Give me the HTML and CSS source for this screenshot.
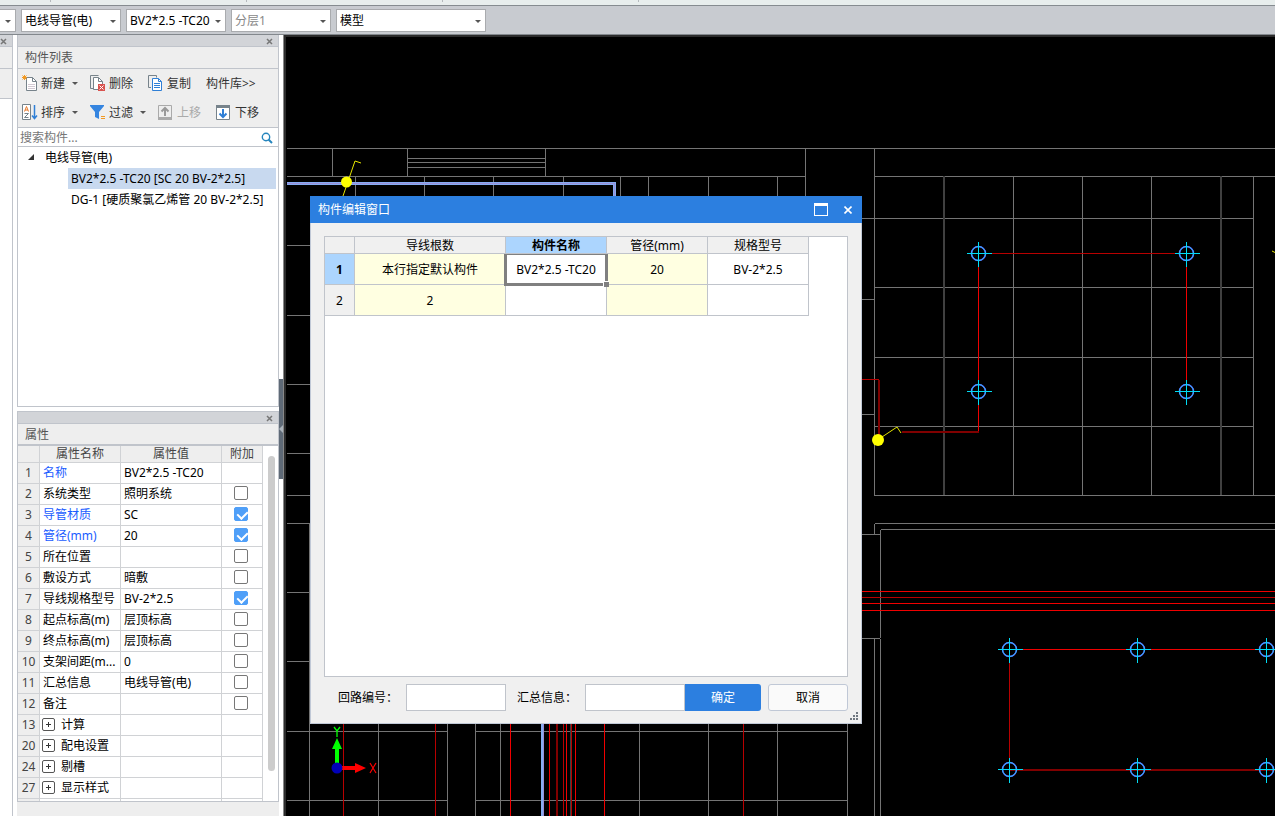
FILE: index.html
```html
<!DOCTYPE html>
<html lang="zh-CN">
<head>
  <meta charset="UTF-8" />
  <meta name="viewport" content="width=device-width, initial-scale=1.0" />
  <title>构件编辑窗口</title>
  <link rel="stylesheet" href="styles.css">
</head>
<body>
  <div class="ribbon-edge"><i></i><i></i><i></i><i></i></div>

  <header class="toolbar">
    <div class="combo combo-cut"><select aria-label="楼层"><option></option></select></div>
    <div class="combo"><select aria-label="构件类型"><option>电线导管(电)</option></select></div>
    <div class="combo"><select aria-label="构件"><option>BV2*2.5 -TC20</option></select></div>
    <div class="combo muted"><select aria-label="分层"><option>分层1</option></select></div>
    <div class="combo combo-wide"><select aria-label="显示"><option>模型</option></select></div>
  </header>

  <main class="workspace">
    <aside class="sliver">
      <div class="dock-strip"><button class="dock-close" aria-label="关闭"><svg width="7" height="7"><path d="M1 1l5 5M6 1l-5 5"/></svg></button></div>
      <div class="sliver-head"></div>
      <div class="sliver-tools"></div>
    </aside>

    <div class="docks">
      <section class="panel list-panel">
        <div class="dock-strip"><button class="dock-close" aria-label="关闭"><svg width="7" height="7"><path d="M1 1l5 5M6 1l-5 5"/></svg></button></div>
        <h2>构件列表</h2>
        <div class="tools">
          <div class="tool-row">
            <button class="tool new">
              <svg width="16" height="17" fill="none"><path d="M4.500 2.500h6l4 4v9h-10z" fill="#fff" stroke="#77838b"/><path d="M10.500 2.500v4h4" stroke="#77838b"/><path d="M6 9.500h7M6 11.500h7M6 13.500h7" stroke="#d3c9d3"/><path d="M2.500 0v5M0 2.500h5M.5.500l4 4M4.500.500l-4 4" stroke="#f29a23"/></svg>
              新建<i class="caret"></i></button>
            <button class="tool del">
              <svg width="16" height="17" fill="none"><path d="M3 13.500H.5v-13h8" stroke="#77838b"/><path d="M3.500 2.500h5l4 4v8h-9z" fill="#fff" stroke="#77838b"/><path d="M8.500 2.500v4h4" stroke="#77838b"/><path d="M8 9h7v7H8z" fill="#d9534f"/><path d="M9.500 10.500l4 4M13.500 10.500l-4 4" stroke="#fff"/></svg>
              删除</button>
            <button class="tool copy">
              <svg width="16" height="17" fill="none"><path d="M3 12.500H.5v-12h8v2" stroke="#77838b"/><path d="M4.500 3.500h6l3 3v9h-9z" fill="#fff" stroke="#2f7fd6"/><path d="M10.500 3.500v3h3M6 8.500h6M6 10.500h6M6 12.500h6" stroke="#2f7fd6"/></svg>
              复制</button>
            <button class="tool">构件库&gt;&gt;</button>
          </div>
          <div class="tool-row">
            <button class="tool new">
              <svg width="16" height="17" fill="none"><path d="M.5.500h8v15h-8z" fill="#fff" stroke="#77838b"/><path d="M2.500 7.500l2-5 2 5M3 6h3" stroke="#e8792b"/><path d="M2.500 9.500h4l-4 4h4" stroke="#77838b"/><path d="M12.500 1v13M10 11.500l2.500 3 2.500-3" stroke="#2f7fd6" stroke-width="1.500"/></svg>
              排序<i class="caret"></i></button>
            <button class="tool filter">
              <svg width="16" height="17"><path d="M0 1h14v1L9 8v7l-4-2V8L0 2z" fill="#3585e0"/><path d="M11 12h4v1h-4zM11 14h4v1h-4z" fill="#f29a23"/></svg>
              过滤<i class="caret"></i></button>
            <button class="tool up" disabled>
              <svg width="16" height="17" fill="none"><path d="M.5 1.500h13v14H.5z" stroke="#aaa"/><path d="M0 13h14v3H0z" fill="#aaa"/><path d="M7 12V5M3.500 7.500L7 4l3.500 3.500" stroke="#999" stroke-width="2"/></svg>
              上移</button>
            <button class="tool">
              <svg width="16" height="17" fill="none"><path d="M.5 1.500h13v14H.5z" fill="#fff" stroke="#77838b"/><path d="M0 1h14v3H0z" fill="#77838b"/><path d="M7 5v8M3.500 9.500L7 13l3.500-3.500" stroke="#2f7fd6" stroke-width="2"/></svg>
              下移</button>
          </div>
        </div>
        <div class="search">
          <input type="text" placeholder="搜索构件..." aria-label="搜索构件">
          <button aria-label="搜索"><svg width="12" height="12" fill="none" stroke="#2585bd"><circle cx="5" cy="5" r="3.700" stroke-width="1.400"/><path d="M7.500 7.500l3.500 3.500" stroke-width="2"/></svg></button>
        </div>
        <ul class="tree">
          <li class="root"><svg width="7" height="7"><path d="M6 0v6H0z" fill="#333"/></svg>电线导管(电)</li>
          <li class="leaf selected">BV2*2.5 -TC20 [SC 20 BV-2*2.5]</li>
          <li class="leaf">DG-1 [硬质聚氯乙烯管 20 BV-2*2.5]</li>
        </ul>
      </section>

      <section class="panel props-panel">
        <div class="dock-strip"><button class="dock-close" aria-label="关闭"><svg width="7" height="7"><path d="M1 1l5 5M6 1l-5 5"/></svg></button></div>
        <h2>属性</h2>
        <div class="props-body">
          <table class="props">
            <colgroup><col class="c-no"><col class="c-name"><col class="c-value"><col class="c-add"></colgroup>
            <thead><tr><th></th><th>属性名称</th><th>属性值</th><th>附加</th></tr></thead>
            <tbody>
              <tr><th>1</th><td class="key">名称</td><td>BV2*2.5 -TC20</td><td></td></tr>
              <tr><th>2</th><td>系统类型</td><td>照明系统</td><td><input type="checkbox" aria-label="系统类型"></td></tr>
              <tr><th>3</th><td class="key">导管材质</td><td>SC</td><td><input type="checkbox" aria-label="导管材质" checked></td></tr>
              <tr><th>4</th><td class="key">管径(mm)</td><td>20</td><td><input type="checkbox" aria-label="管径" checked></td></tr>
              <tr><th>5</th><td>所在位置</td><td></td><td><input type="checkbox" aria-label="所在位置"></td></tr>
              <tr><th>6</th><td>敷设方式</td><td>暗敷</td><td><input type="checkbox" aria-label="敷设方式"></td></tr>
              <tr><th>7</th><td>导线规格型号</td><td>BV-2*2.5</td><td><input type="checkbox" aria-label="导线规格型号" checked></td></tr>
              <tr><th>8</th><td>起点标高(m)</td><td>层顶标高</td><td><input type="checkbox" aria-label="起点标高"></td></tr>
              <tr><th>9</th><td>终点标高(m)</td><td>层顶标高</td><td><input type="checkbox" aria-label="终点标高"></td></tr>
              <tr><th>10</th><td>支架间距(m...</td><td>0</td><td><input type="checkbox" aria-label="支架间距"></td></tr>
              <tr><th>11</th><td>汇总信息</td><td>电线导管(电)</td><td><input type="checkbox" aria-label="汇总信息"></td></tr>
              <tr><th>12</th><td>备注</td><td></td><td><input type="checkbox" aria-label="备注"></td></tr>
              <tr><th>13</th><td><button class="expand" aria-label="展开"></button>计算</td><td></td><td></td></tr>
              <tr><th>20</th><td><button class="expand" aria-label="展开"></button>配电设置</td><td></td><td></td></tr>
              <tr><th>24</th><td><button class="expand" aria-label="展开"></button>剔槽</td><td></td><td></td></tr>
              <tr><th>27</th><td><button class="expand" aria-label="展开"></button>显示样式</td><td></td><td></td></tr>
              <tr><th></th><td></td><td></td><td></td></tr>
            </tbody>
          </table>
          <div class="scroll"><div class="thumb"></div></div>
        </div>
      </section>
      <div class="docks-foot"></div>
    </div>

    <div class="splitter"><button aria-label="收起面板"><svg width="4" height="8"><path d="M4 0v8L0 4z" fill="#aab2ba"/></svg></button></div>

    <div class="viewport">
      <svg class="drawing" width="100%" height="100%" fill="none" shape-rendering="crispEdges">
        <defs>
          <g id="lamp">
            <circle r="7" stroke="#7a4dff" stroke-width="1.500" shape-rendering="auto"/>
            <circle r="7" stroke="#19c8ff" shape-rendering="auto"/>
            <path d="M-12 0h25M0-12v25" stroke="#00dcf5"/>
          </g>
        </defs>
        <g transform="translate(-284 -35)">
          <!-- walls and ceiling grid, upper left -->
          <path stroke="#747474" d="M287 148.500H1275M287 176.500H805M332.500 148v28M407.500 148v28M545.500 148v28M407 158.500h139M407 162.500h139M407 167.500h139M805.500 148v50
            M355.500 176v20M424.500 176v20M493.500 176v20M563.500 176v20M620.500 176v20M648.500 176v20M708.500 176v20M777.500 176v20
            M287 245.500h24M287 315.500h24M287 384.500h24M287 453.500h24M287 495.500h24M287 523.500h24M287 592.500h24M287 661.500h24M309.500 523v293"/>
          <path stroke="#747474" d="M287 731.500H447M287 800.500H447M475 731.500H847M475 800.500H847M378.500 720v96M447.500 720v96M475.500 720v96M500.500 720v96M639.500 720v96M708.500 720v96M777.500 720v96M847.500 720v96"/>
          <!-- room on the right -->
          <path stroke="#747474" d="M874.500 148v348M874 176.500h401M862 218.500h391M874 287.500h379M874 357.500h379M874 426.500h379M874 495.500h401
            M1013.500 176v319M1082.500 176v319M1151.500 176v319M1253.500 176v319M862 299.500h12M862 414.500h12"/>
          <path stroke="#404040" stroke-width="2" d="M944 176v319M1221 176v319M571 720v96"/>
          <path stroke="#747474" d="M875 523.500h400M881 529.500h394M874.500 524v10M880.500 530v108M862 534.500h18M862 638.500h18M874.500 639v177M880.500 639v177"/>
          <!-- circuits -->
          <path stroke="#f00000" d="M862 591.500h413M862 603.500h413M862 610.500h413M978.500 253v179M1186.500 253v139M1009 649.500h266
            M510.500 720v96M549.500 720v96M566.500 720v96M575.500 720v96M604.500 720v96"/>
          <path stroke="#b80000" d="M862 597.500h413M978 253.500h208M862 379.500h17M1009.500 649v121M343.500 720v96M435.500 720v96M563.500 720v96M571.500 720v96M743.500 720v96"/>
          <path stroke="#800000" stroke-width="2" d="M879 380v56M902 432h77M1009 770h266M557 720v96"/>
          <path stroke="#86adf2" stroke-width="3" d="M287 183.500H614.500V198M542.500 720v96"/>
          <path stroke="#9a8fd8" d="M287 183.500H614.500V198M543.500 720v96"/>
          <!-- risers -->
          <g stroke="#e6e600" shape-rendering="auto">
            <path d="M343 196l12-35 6 2M882 437l15-10 4 6M1272 251l4 2"/>
            <circle cx="346.500" cy="182" r="5.500" fill="#ff0" stroke="none"/>
            <circle cx="878" cy="440" r="6" fill="#ff0" stroke="none"/>
          </g>
          <use href="#lamp" x="978.500" y="253.500"/>
          <use href="#lamp" x="1186.500" y="253.500"/>
          <use href="#lamp" x="978.500" y="391.500"/>
          <use href="#lamp" x="1186.500" y="391.500"/>
          <use href="#lamp" x="1009.500" y="649.500"/>
          <use href="#lamp" x="1137.500" y="649.500"/>
          <use href="#lamp" x="1266.500" y="649.500"/>
          <use href="#lamp" x="1009.500" y="769.500"/>
          <use href="#lamp" x="1137.500" y="769.500"/>
          <use href="#lamp" x="1266.500" y="769.500"/>
          <!-- axis marker -->
          <g shape-rendering="auto">
            <path d="M335 763v-14h-3l5-11 5 11h-3v14z" fill="#0f0"/>
            <path d="M342 766h13v-3l11 5-11 5v-3h-13z" fill="#f00"/>
            <circle cx="337" cy="768" r="5.500" fill="#0000b8"/>
            <path d="M334 727l3 4 3-4M337 731v6" stroke="#0f0" stroke-width="1.300"/>
            <path d="M370 763l6 10M376 763l-6 10" stroke="#f00" stroke-width="1.200"/>
          </g>
        </g>
      </svg>

      <div class="dialog" role="dialog" aria-labelledby="dialog-title">
        <div class="titlebar">
          <h1 id="dialog-title">构件编辑窗口</h1>
          <button aria-label="最大化"><svg width="14" height="13"><path d="M0 0h14v13H0zM1 3v9h12V3z" fill="#fff" fill-rule="evenodd"/></svg></button>
          <button aria-label="关闭"><svg width="8" height="8"><path d="M.5.500l7 7M7.500.500l-7 7" stroke="#fff" stroke-width="1.600"/></svg></button>
        </div>
        <div class="dialog-body">
          <div class="sheet">
            <table>
              <colgroup><col class="s-no"><col class="s-wires"><col class="s-col"><col class="s-col"><col class="s-col"></colgroup>
              <thead><tr><th></th><th>导线根数</th><th class="active">构件名称</th><th>管径(mm)</th><th>规格型号</th></tr></thead>
              <tbody>
                <tr><th class="active">1</th><td class="fixed">本行指定默认构件</td><td class="editing">BV2*2.5 -TC20</td><td class="fixed">20</td><td>BV-2*2.5</td></tr>
                <tr><th>2</th><td class="fixed">2</td><td></td><td class="fixed"></td><td></td></tr>
              </tbody>
            </table>
          </div>
          <form class="dialog-foot">
            <label for="loop">回路编号：</label>
            <input id="loop" type="text">
            <label for="summary">汇总信息：</label>
            <input id="summary" type="text">
            <button type="button" class="ok">确定</button>
            <button type="button" class="cancel">取消</button>
          </form>
        </div>
        <svg class="grip" width="8" height="8"><path d="M6 0h2v2H6zM3 3h2v2H3zM6 3h2v2H6zM0 6h2v2H0zM3 6h2v2H3zM6 6h2v2H6z" fill="#6f7780"/></svg>
      </div>
    </div>
  </main>
</body>
</html>
```
FILE: styles.css
```css
:root {
  --line: #c0c4cb;
  --panel: #eee;
  --strip: #d2d4d8;
  --blue: #2c7fe0;
}

* {
  box-sizing: border-box;
}

body {
  margin: 0;
  height: 100vh;
  display: flex;
  flex-direction: column;
  overflow: hidden;
  background: #fff;
  color: #000;
  font: 12px/16px "Noto Sans", "Noto Sans CJK SC", sans-serif;
}

button, input, select {
  font: inherit;
  color: inherit;
  margin: 0;
  padding: 0;
  border: 0;
  border-radius: 0;
  background: none;
}

h1, h2 {
  margin: 0;
  font-size: 12px;
  font-weight: normal;
}

svg {
  display: block;
  flex: none;
}

table {
  border-collapse: separate;
  border-spacing: 0;
  table-layout: fixed;
}

/* top bar */
.ribbon-edge {
  flex: none;
  height: 6px;
  display: flex;
  gap: 195px;
  padding-left: 50px;
  background: #e8eeed;
  border-bottom: 1px solid #868c90;
}

.ribbon-edge i {
  width: 1px;
  height: 2px;
  background: #b5babd;
}

.toolbar {
  flex: none;
  display: flex;
  gap: 5px;
  padding: 3px 0 2px;
  background: #c8cbd0;
  border-bottom: 1px solid #83888d;
}

.combo {
  position: relative;
  width: 100px;
  height: 23px;
  background: #fff;
  border: 1px solid #a9abae;
}

.combo select {
  appearance: none;
  width: 100%;
  height: 100%;
  padding: 0 10px 0 3px;
}

.combo::after, .caret {
  border: 3px solid transparent;
  border-top-color: #555;
  border-bottom: 0;
}

.combo::after {
  content: "";
  position: absolute;
  right: 4px;
  top: 10px;
}

.combo-cut {
  width: 16px;
  border-left: 0;
}

.combo-wide {
  width: 150px;
}

.muted {
  color: #888;
}

/* docked panels */
.workspace {
  flex: 1;
  min-height: 0;
  display: flex;
}

.sliver {
  flex: none;
  width: 13px;
  border-right: 1px solid var(--line);
}

.dock-strip {
  flex: none;
  display: flex;
  justify-content: flex-end;
  align-items: center;
  height: 12px;
  padding: 2px 5px 0 0;
  background: var(--strip);
  border-bottom: 1px solid var(--line);
}

.dock-close {
  stroke: #777;
  stroke-width: 1.5;
}

.sliver-head {
  height: 22px;
  background: var(--panel);
  border-bottom: 1px solid var(--line);
}

.sliver-tools {
  height: 30px;
  background: var(--panel);
  border-bottom: 1px solid var(--line);
}

.docks {
  flex: none;
  width: 262px;
  margin-left: 4px;
  display: flex;
  flex-direction: column;
}

.panel {
  display: flex;
  flex-direction: column;
  border: 1px solid var(--line);
  border-top: 0;
  background: #fff;
}

.panel h2 {
  flex: none;
  height: 22px;
  padding: 3px 7px 0;
  background: var(--panel);
  border-bottom: 1px solid var(--line);
  color: #555;
}

.tools {
  display: flex;
  flex-direction: column;
  background: var(--panel);
  border-bottom: 1px solid var(--line);
}

.tool-row {
  display: flex;
  height: 29px;
  padding-left: 4px;
}

.tool {
  display: flex;
  align-items: center;
  gap: 3px;
  white-space: nowrap;
  color: #333;
}

.tool:disabled {
  color: #aaa;
}

.new {
  width: 68px;
}

.del, .copy, .up {
  width: 58px;
}

.filter {
  width: 68px;
}

.caret {
  margin-left: 4px;
}

.search {
  display: flex;
  align-items: center;
  height: 19px;
  padding: 1px 5px 0 2px;
  border-bottom: 1px solid var(--line);
}

.search input {
  flex: 1;
  min-width: 0;
  outline: 0;
}

.search input::placeholder {
  color: #777;
  opacity: 1;
}

.tree {
  height: 259px;
  margin: 0;
  padding: 0 2px 0 0;
  list-style: none;
  line-height: 21px;
}

.root {
  display: flex;
  align-items: center;
  gap: 10px;
  padding-left: 10px;
}

.leaf {
  margin-left: 50px;
  padding-left: 3px;
  white-space: nowrap;
}

.selected {
  background: #c8d9ef;
}

.props-panel {
  flex: 1;
  min-height: 0;
  margin-top: 4px;
  border-top: 1px solid var(--line);
}

.props-panel h2 {
  border-bottom-width: 2px;
}

.props-body {
  flex: 1;
  min-height: 0;
  display: flex;
  overflow: hidden;
}

.props {
  flex: none;
  width: 245px;
  height: max-content;
}

.c-no { width: 22px; }
.c-name { width: 81px; }
.c-value { width: 101px; }
.c-add { width: 41px; }

.props th, .props td {
  height: 21px;
  padding: 0 0 0 3px;
  border-right: 1px solid #d0d2d5;
  border-bottom: 1px solid #d0d2d5;
  text-align: left;
  font-weight: normal;
  white-space: nowrap;
  overflow: hidden;
}

.props th {
  padding: 0;
  background: var(--panel);
  color: #444;
  text-align: center;
}

.props thead th {
  height: 17px;
}

.props td:last-child {
  padding: 0;
  text-align: center;
}

.props .key {
  color: #1a5cff;
}

.props input {
  appearance: none;
  display: block;
  position: relative;
  width: 14px;
  height: 14px;
  margin: 0 auto 2px 12px;
  border: 1px solid #777;
  border-radius: 2px;
}

.props input:checked {
  background: #4f9ff8;
  border-color: #4f9ff8;
}

.props input:checked::after {
  content: "";
  position: absolute;
  left: 4px;
  top: 1px;
  width: 5px;
  height: 8px;
  border: solid #fff;
  border-width: 0 2px 2px 0;
  transform: rotate(45deg);
}

.expand {
  width: 13px;
  height: 13px;
  margin: 0 6px 0 -1px;
  border: 1px solid #555;
  border-radius: 2px;
  vertical-align: -1px;
  background:
    linear-gradient(#333, #333) center / 5px 1px no-repeat,
    linear-gradient(#333, #333) center / 1px 5px no-repeat;
}

.scroll {
  flex: 1;
  padding: 10px 3px 30px 5px;
}

.thumb {
  height: 100%;
  border-radius: 4px;
  background: #ccc;
}

.docks-foot {
  flex: none;
  height: 14px;
  background: var(--panel);
}

.splitter {
  flex: none;
  width: 5px;
  display: flex;
  align-items: center;
  padding-top: 6px;
  border-right: 1px solid #888;
}

.splitter button {
  width: 4px;
  height: 100px;
  background: #5f6a77;
}

/* drawing area */
.viewport {
  position: relative;
  flex: 1;
  min-width: 0;
  overflow: hidden;
  background: #000;
}

.viewport::before {
  content: "";
  position: absolute;
  inset: 0;
  border: solid #2b2b2b;
  border-width: 2px 0 0 2px;
}

.drawing {
  position: absolute;
  inset: 0;
}

.dialog {
  position: absolute;
  left: 26px;
  top: 161px;
  width: 552px;
  background: #f0f0f0;
  border: 1px solid #c0c8d6;
  border-top: 0;
}

.titlebar {
  display: flex;
  align-items: center;
  gap: 16px;
  height: 27px;
  margin: 0 -1px;
  padding: 0 10px 0 8px;
  background: var(--blue);
  color: #fff;
}

.titlebar h1 {
  flex: 1;
}

.dialog-body {
  padding: 13px 13px 12px;
}

.sheet {
  height: 441px;
  background: #fff;
  border: 1px solid var(--line);
}

.sheet table {
  width: 484px;
}

.s-no { width: 30px; }
.s-wires { width: 151px; }
.s-col { width: 101px; }

.sheet th, .sheet td {
  height: 31px;
  padding: 2px 0 0;
  border-right: 1px solid var(--line);
  border-bottom: 1px solid var(--line);
  text-align: center;
  font-weight: normal;
  white-space: nowrap;
}

.sheet th {
  background: #f0f0f0;
}

.sheet thead th {
  height: 17px;
  padding: 1px 0 0;
  line-height: 15px;
}

.sheet th.active {
  background: #acd5fe;
  font-weight: bold;
}

.sheet .fixed {
  background: #ffffe1;
}

.sheet .editing {
  position: relative;
}

.editing::before {
  content: "";
  position: absolute;
  inset: 0 -2px -2px -2px;
  border: 3px solid #808080;
  border-top-width: 1px;
}

/* fill handle */
.editing::after {
  content: "";
  position: absolute;
  right: -3px;
  bottom: -3px;
  width: 5px;
  height: 5px;
  background: #808080;
  border: solid #fff;
  border-width: 1px 0 0 1px;
}

.dialog-foot {
  display: flex;
  align-items: center;
  height: 27px;
  margin-top: 7px;
  padding-left: 14px;
}

.dialog-foot label {
  width: 68px;
}

.dialog-foot input {
  width: 100px;
  height: 27px;
  padding: 0 4px;
  background: #fff;
  border: 1px solid var(--line);
}

.dialog-foot input + label {
  margin-left: 11px;
}

.dialog-foot button {
  height: 27px;
  border-radius: 3px;
}

.ok {
  width: 76px;
  background: var(--blue);
  color: #fff;
}

.dialog-foot .ok {
  border-radius: 0 3px 3px 0;
}

.cancel {
  flex: 1;
  margin-left: 7px;
  background: #fafafa;
  border: 1px solid #c0c8d6;
}

.grip {
  position: absolute;
  right: 3px;
  bottom: 3px;
}
```
